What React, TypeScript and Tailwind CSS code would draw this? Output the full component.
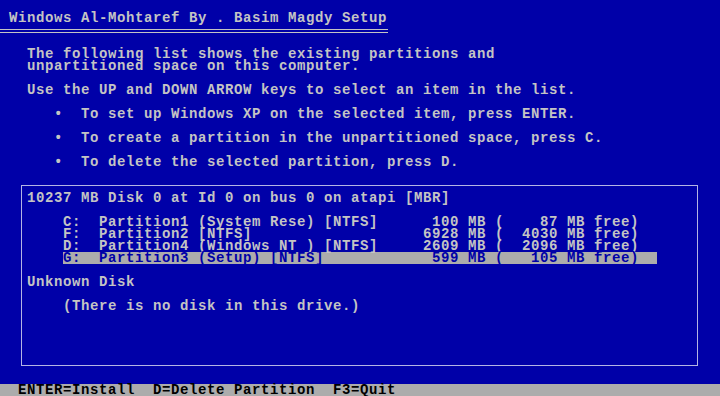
const mono = { fontFamily: '"Liberation Mono", "DejaVu Sans Mono", monospace' };

type Part = { drive: string; name: string; size: string; free: string; selected?: boolean };

const parts: Part[] = [
  { drive: 'C:', name: 'Partition1 (System Rese) [NTFS]', size: '100', free: '87' },
  { drive: 'F:', name: 'Partition2 [NTFS]', size: '6928', free: '4030' },
  { drive: 'D:', name: 'Partition4 (Windows NT ) [NTFS]', size: '2609', free: '2096' },
  { drive: 'G:', name: 'Partition3 (Setup) [NTFS]', size: '599', free: '105', selected: true },
];

// fixed 80-column text mode: 9px per column, 12px per row
const partLine = (p: Part) =>
  `${p.drive}  ${p.name.padEnd(36)}${p.size.padStart(4)} MB (  ${p.free.padStart(4)} MB free)  `;

const Row = ({ text = '', className = '' }: { text?: string; className?: string }) => (
  <div className={`h-[12px] leading-[12px] whitespace-pre ${className}`}>{text}</div>
);

export default function App() {
  return (
    <div
      className="w-[720px] h-[396px] overflow-hidden bg-[#0000a8] text-[#c4c4c4] text-[14px] tracking-[0.6px] font-bold flex flex-col"
      style={mono}
    >
      <Row />
      <Row text=" Windows Al-Mohtaref By . Basim Magdy Setup" />
      <div className="mt-[5px] mb-[3px] w-[388px] h-[4px] border-y border-[#c4c4c4]" />
      <Row />
      <Row text="   The following list shows the existing partitions and" />
      <Row text="   unpartitioned space on this computer." />
      <Row />
      <Row text="   Use the UP and DOWN ARROW keys to select an item in the list." />
      <Row />
      <Row text="      •  To set up Windows XP on the selected item, press ENTER." />
      <Row />
      <Row text="      •  To create a partition in the unpartitioned space, press C." />
      <Row />
      <Row text="      •  To delete the selected partition, press D." />
      <Row />

      <div className="mt-[5px] ml-[21px] w-[677px] border border-[#b4b4e4] pt-[6px] pb-[5px] pl-[5px]">
        <Row text="10237 MB Disk 0 at Id 0 on bus 0 on atapi [MBR]" />
        <Row />
        {parts.map((p) =>
          p.selected ? (
            <Row
              key={p.drive}
              text={partLine(p)}
              className="ml-[36px] w-[594px] bg-[#acacac] text-[#0000a8]"
            />
          ) : (
            <Row key={p.drive} text={'    ' + partLine(p)} />
          ),
        )}
        <Row />
        <Row text="Unknown Disk" />
        <Row />
        <Row text="    (There is no disk in this drive.)" />
        <Row />
        <Row />
        <Row />
        <Row />
      </div>

      <div className="h-[18px]" />
      <Row text="  ENTER=Install  D=Delete Partition  F3=Quit" className="bg-[#acacac] text-black" />
    </div>
  );
}
